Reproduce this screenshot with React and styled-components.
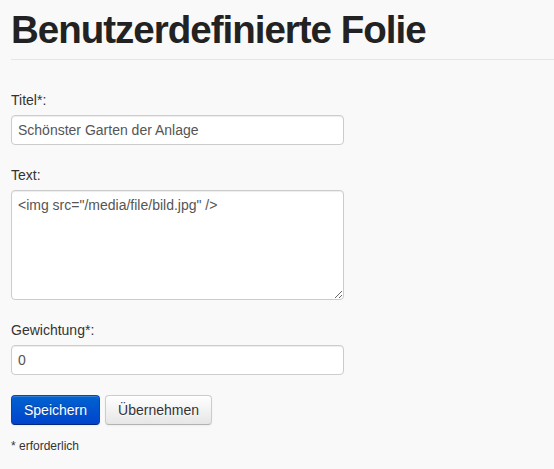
import React from "react";
import styled, { createGlobalStyle } from "styled-components";

const Global = createGlobalStyle`
  html, body { margin: 0; padding: 0; background: #f9f9f9; }
  body { font-family: "Liberation Sans", Arial, sans-serif; color: #333; font-size: 14px; line-height: 20px; }
`;

const Page = styled.div`
  padding: 0 0 0 11px;
`;

const Header = styled.div`
  border-bottom: 1px solid #e5e5e5;
  padding: 10px 0 9px;
  margin-bottom: 30px;
`;

const Title = styled.h1`
  margin: 0;
  font-size: 38.5px;
  line-height: 40px;
  letter-spacing: -1px;
  font-weight: bold;
  color: #222;
`;

const Form = styled.form`
  display: flex;
  flex-direction: column;
  gap: 20px;
  width: 333px;
`;

const Group = styled.div`
  display: flex;
  flex-direction: column;
  gap: 5px;
`;

const Label = styled.label`
  display: block;
  font-size: 14px;
  line-height: 20px;
  color: #333;
`;

const field = `
  box-sizing: border-box;
  width: 333px;
  font-family: "Liberation Sans", Arial, sans-serif;
  font-size: 14px;
  line-height: 20px;
  color: #555;
  background: #fff;
  border: 1px solid #ccc;
  border-radius: 4px;
  box-shadow: inset 0 1px 1px rgba(0,0,0,0.075);
  padding: 4px 6px;
  margin: 0;
  outline: none;
`;

const Input = styled.input`
  ${field}
  height: 30px;
`;

const TextArea = styled.textarea`
  ${field}
  height: 110px;
  resize: vertical;
  display: block;
`;

const Actions = styled.div`
  display: flex;
  gap: 5px;
`;

const Button = styled.button`
  box-sizing: border-box;
  height: 30px;
  padding: 4px 12px;
  font-family: "Liberation Sans", Arial, sans-serif;
  font-size: 14px;
  line-height: 20px;
  border-radius: 4px;
  cursor: pointer;
  color: ${p => (p.$primary ? "#fff" : "#333")};
  border-width: 1px;
  border-style: solid;
  border-color: ${p => (p.$primary ? "#0044cc #0044cc #002a80" : "#ccc #ccc #b3b3b3")};
  background: ${p => (p.$primary ? "linear-gradient(#0063d1, #0044cc)" : "linear-gradient(#ffffff, #e6e6e6)")};
  text-shadow: ${p => (p.$primary ? "0 -1px 0 rgba(0,0,0,0.25)" : "0 1px 1px rgba(255,255,255,0.75)")};
  box-shadow: inset 0 1px 0 rgba(255,255,255,0.2), 0 1px 2px rgba(0,0,0,0.05);
`;

const Note = styled.p`
  margin: -7px 0 0;
  font-size: 12px;
  line-height: 16px;
  color: #333;
`;

export default function App() {
  return (
    <Page>
      <Global />
      <Header>
        <Title>Benutzerdefinierte Folie</Title>
      </Header>
      <Form onSubmit={e => e.preventDefault()}>
        <Group>
          <Label htmlFor="t">Titel*:</Label>
          <Input id="t" type="text" defaultValue="Schönster Garten der Anlage" />
        </Group>
        <Group>
          <Label htmlFor="x">Text:</Label>
          <TextArea id="x" defaultValue={'<img src="/media/file/bild.jpg" />'} />
        </Group>
        <Group>
          <Label htmlFor="g">Gewichtung*:</Label>
          <Input id="g" type="text" defaultValue="0" />
        </Group>
        <Actions>
          <Button $primary type="submit">Speichern</Button>
          <Button type="button">Übernehmen</Button>
        </Actions>
        <Note>* erforderlich</Note>
      </Form>
    </Page>
  );
}
